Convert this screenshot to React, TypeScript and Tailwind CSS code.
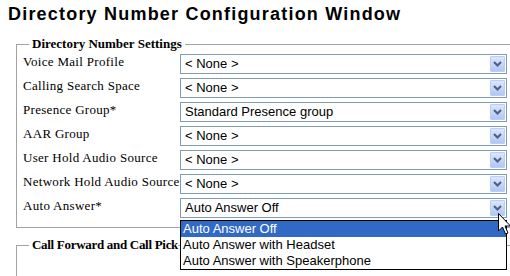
import { ReactNode } from 'react';

const rows = [
  { label: 'Voice Mail Profile', value: '< None >' },
  { label: 'Calling Search Space', value: '< None >' },
  { label: 'Presence Group*', value: 'Standard Presence group' },
  { label: 'AAR Group', value: '< None >' },
  { label: 'User Hold Audio Source', value: '< None >' },
  { label: 'Network Hold Audio Source', value: '< None >' },
  { label: 'Auto Answer*', value: 'Auto Answer Off', open: true },
];

const options = ['Auto Answer Off', 'Auto Answer with Headset', 'Auto Answer with Speakerphone'];

function Chevron() {
  return (
    <svg width="9" height="6" viewBox="0 0 9 6">
      <path d="M1 1 L4.5 4.5 L8 1" fill="none" stroke="#4a5f87" strokeWidth="2" />
    </svg>
  );
}

function Select({ value, children }: { value: string; children?: ReactNode }) {
  return (
    <div className="relative w-[327px] h-[20px] border border-[#7f9db9] bg-white flex items-center">
      <span className="pl-[4px] flex-1 text-[13px] leading-[18px] text-black" style={{ fontFamily: '"Liberation Sans", Arial, sans-serif' }}>
        {value}
      </span>
      <div className="w-[15px] h-[16px] mr-[1px] rounded-[1px] border border-[#b9cdf6] bg-gradient-to-b from-[#dce6fd] to-[#b2c6f4] flex items-center justify-center">
        <Chevron />
      </div>
      {children}
    </div>
  );
}

export default function App() {
  return (
    <div className="relative w-[510px] h-[276px] overflow-hidden bg-white">
      <h1
        className="pl-[8px] pt-[4px] h-[36px] text-[18px] leading-[20px] font-bold tracking-[1.2px] text-black"
        style={{ fontFamily: '"Liberation Sans", Arial, sans-serif' }}
      >
        Directory Number Configuration Window
      </h1>

      <div style={{ fontFamily: '"Liberation Serif", "Times New Roman", serif' }}>
        <fieldset className="ml-[16px] w-[494px] border-l border-t border-b border-[#a3a3a3] pb-[9px]">
          <legend className="ml-[12px] px-[3px] text-[13px] leading-[16px] font-bold text-black">
            Directory Number Settings
          </legend>
          <div className="flex flex-col gap-[4px] pt-[2px]">
            {rows.map((r) => (
              <div key={r.label} className="flex items-start">
                <div className="w-[163px] pl-[6px] text-[13px] leading-[15px] tracking-[0.3px] text-black whitespace-nowrap">
                  {r.label}
                </div>
                <Select value={r.value}>
                  {r.open && (
                    <div
                      className="absolute left-[-1px] top-[21px] w-[327px] border border-black bg-white z-10"
                      style={{ fontFamily: '"Liberation Sans", Arial, sans-serif' }}
                    >
                      {options.map((o, i) => (
                        <div
                          key={o}
                          className={`h-[16px] pl-[2px] text-[13px] leading-[16px] ${i === 0 ? 'bg-[#316ac5] text-white' : 'text-black'}`}
                        >
                          {o}
                        </div>
                      ))}
                    </div>
                  )}
                </Select>
              </div>
            ))}
          </div>
        </fieldset>

        {/* second group, mostly hidden under the open list */}
        <fieldset className="ml-[16px] mt-[9px] w-[494px] h-[60px] border-l border-t border-[#a3a3a3]">
          <legend className="ml-[12px] pl-[3px] text-[13px] leading-[16px] font-bold tracking-[-0.3px] text-black whitespace-nowrap">
            Call Forward and Call Pick
          </legend>
        </fieldset>
      </div>

      <svg className="absolute left-[498px] top-[213px] z-20" width="14" height="24" viewBox="0 0 14 24">
        <path d="M0.5 0.5 L0.5 18 L4.5 14 L7.5 21 L10 20 L7 13 L12.5 13 Z" fill="white" stroke="black" strokeWidth="1" />
      </svg>
    </div>
  );
}
